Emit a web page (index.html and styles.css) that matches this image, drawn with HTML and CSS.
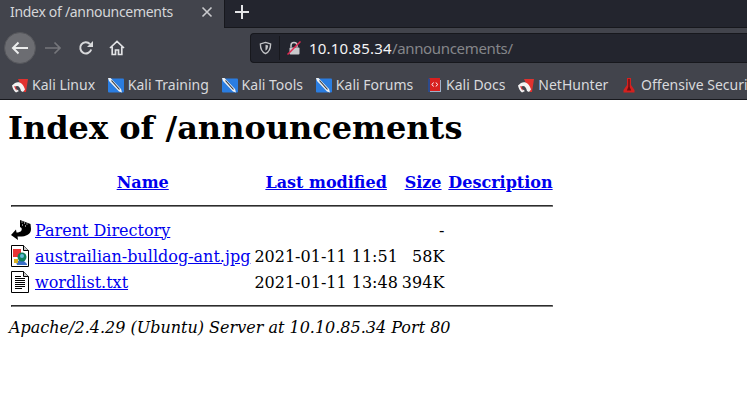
FILE: index.html
```html
<!DOCTYPE html>
<html>
<head>
<meta charset="utf-8">
<title>Index of /announcements</title>
<link rel="stylesheet" href="styles.css">
</head>
<body>
<header class="chrome">
  <div class="tabstrip">
    <div class="tab">
      <span class="tab-title">Index of /announcements</span>
      <svg class="tab-close" width="12" height="12" viewBox="0 0 12 12"><path d="M1.5 1.5l9 9M10.5 1.5l-9 9" stroke="#c9cacd" stroke-width="1.6" fill="none"/></svg>
    </div>
    <div class="tab-rest">
      <div class="newtab">
        <svg width="16" height="16" viewBox="0 0 16 16"><path d="M8 1v14M1 8h14" stroke="#e4e5e7" stroke-width="2" fill="none"/></svg>
      </div>
    </div>
  </div>
  <div class="navbar">
    <div class="nav-back">
      <svg width="18" height="18" viewBox="0 0 18 18"><path d="M17 9H2M7.500 3.500L2 9l5.500 5.500" stroke="#eceded" stroke-width="2" fill="none"/></svg>
    </div>
    <svg class="nav-icon nav-forward" width="18" height="18" viewBox="0 0 18 18"><path d="M1 9h15M10.500 3.500L16 9l-5.500 5.500" stroke="#75767b" stroke-width="1.700" fill="none"/></svg>
    <svg class="nav-icon nav-reload" width="16" height="16" viewBox="0 0 16 16"><path d="M13.200 9.500A5.600 5.600 0 1 1 12 4.100" stroke="#d8d9db" stroke-width="2" fill="none"/><path d="M15 1v6H9z" fill="#d8d9db"/></svg>
    <svg class="nav-icon nav-home" width="16" height="16" viewBox="0 0 16 16"><path d="M1 8l7-6.500L15 8M3.200 6.800V14.500h3.300V10h3v4.500h3.300V6.800" stroke="#e2e3e5" stroke-width="1.700" fill="none"/></svg>
    <div class="urlbar">
      <svg class="shield" width="13" height="14" viewBox="0 0 14 14"><path d="M7 1l5.500 1.600c0 5-1.500 8.600-5.500 10.400C3 11.200 1.500 7.600 1.500 2.600z" stroke="#c3c4c7" stroke-width="1.500" fill="none"/><path d="M7 3.500l2.800.8c0 2.400-.8 4.300-2.800 5.700z" fill="#c3c4c7"/></svg>
      <span class="url-sep"></span>
      <svg class="lock" width="14" height="14" viewBox="0 0 14 14"><path d="M4 6.500V4.500a3 3 0 0 1 6 0v2" stroke="#c9cacd" stroke-width="1.500" fill="none"/><rect x="2.500" y="6.500" width="10" height="7" rx="1" fill="#c9cacd"/><path d="M0.500 13.500L13.500 .5" stroke="#e22850" stroke-width="1.500"/></svg>
      <span class="url"><span class="url-host">10.10.85.34</span><span class="url-path">/announcements/</span></span>
    </div>
  </div>
  <nav class="bookmarks">
    <a class="bookmark"><svg class="fav" viewBox="0 0 16 16"><use href="#kali-red"/></svg>Kali Linux</a>
    <a class="bookmark"><svg class="fav" viewBox="0 0 16 16"><use href="#kali-blue"/></svg>Kali Training</a>
    <a class="bookmark"><svg class="fav" viewBox="0 0 16 16"><use href="#kali-blue"/></svg>Kali Tools</a>
    <a class="bookmark"><svg class="fav" viewBox="0 0 16 16"><use href="#kali-blue"/></svg>Kali Forums</a>
    <a class="bookmark"><svg class="fav" viewBox="0 0 16 16"><path d="M3 1h11v13H3z" fill="#d8201f"/><path d="M2 1.500h2V15H2z" fill="#2c4a8c"/><path d="M14 3h1v12H4v-1h10z" fill="#9fb0c8"/><path d="M7.500 5.500L6 7.500l1.500 2M10 5.500l1.500 2-1.500 2" stroke="#fff" stroke-width="1" fill="none"/></svg>Kali Docs</a>
    <a class="bookmark"><svg class="fav" viewBox="0 0 16 16"><use href="#kali-red"/></svg>NetHunter</a>
    <a class="bookmark"><svg class="fav" viewBox="0 0 16 16"><path d="M6 1h4v7l3.500 5v2.500h-11V13L6 8z" fill="#d5211f"/><path d="M7.300 2h1.400v8l1.500 3.500H5.800L7.300 10z" fill="#6b0f10"/></svg>Offensive Security</a>
  </nav>
</header>
<svg class="defs" width="0" height="0">
  <defs>
    <g id="kali-red"><path d="M6 2h10l-2 13h-2z" fill="#e0322f"/><path d="M0 8.500L3 6c4-2 8 0 10 6.500l-2 2.500-2-1c-.5-3-2-5-4-5-1.500 0-2 1-1.500 2.500L7 14l-3 1.500C2 14.500.5 11 0 8.500z" fill="#f3f3f3"/><path d="M2 9.500L4 13l1 .5L3.500 9z" fill="#d8343a"/></g>
    <g id="kali-blue"><rect x="0" y="1.500" width="16" height="14" rx="1" fill="#2a7de1"/><path d="M0 1l2.500 0L13 12l1 3.500-3-1L1 4z" fill="#eef1f4"/><path d="M3.500 3.500L11.500 12.500" stroke="#2b2d33" stroke-width="1.100"/></g>
  </defs>
</svg>
<main class="page">
  <h1 class="title">Index of /announcements</h1>
  <table class="listing">
    <tr class="listing-head"><th class="col-icon"></th><th><a href="#">Name</a></th><th><a href="#">Last modified</a></th><th><a href="#">Size</a></th><th><a href="#">Description</a></th></tr>
    <tr><th colspan="5"><hr class="rule"></th></tr>
    <tr>
      <td class="col-icon"><svg class="file-icon" viewBox="0 0 20 22"><path d="M0 16L5 10.500l.5 3C9 13.500 11.500 12 10.500 9L9 8V1l10.500 4 .5 5c0 6-6 8-13.500 7.500l.5 3.500z" fill="#000"/><path d="M10.500 2.500h1v1h-1zM13 3.500h1v1h-1zM15.500 4.500h1v1h-1zM11 5.500h1v1h-1zM14 6.500h1v1h-1z" fill="#fff"/></svg></td>
      <td><a href="#">Parent Directory</a></td><td class="right"></td><td class="right">- </td><td></td>
    </tr>
    <tr>
      <td class="col-icon"><svg class="file-icon" viewBox="0 0 20 22"><path d="M.5.500h12l5 5v16H.500z" fill="#fff" stroke="#000"/><path d="M12.500.500v5h5" fill="#ccc" stroke="#000"/><path d="M2 4h8v8H2z" fill="#e83434"/><path d="M5 17l6-3 5 5v1H6z" fill="#3a6fc8"/><circle cx="11" cy="12" r="4.500" fill="#0f7f5c"/><circle cx="11" cy="11" r="2" fill="#63b8d8"/><path d="M3 14h4v4H3z" fill="#d8b020"/></svg></td>
      <td><a href="#">austrailian-bulldog-ant.jpg</a></td><td class="right">2021-01-11 11:51</td><td class="right">58K</td><td></td>
    </tr>
    <tr>
      <td class="col-icon"><svg class="file-icon" viewBox="0 0 20 22"><path d="M.5.500h12l5 5v16H.500z" fill="#fff" stroke="#000"/><path d="M12.500.500v5h5" fill="#ccc" stroke="#000"/><path d="M4 5.500h6M4 7.500h10M4 9.500h10M4 11.500h10M4 13.500h10M4 15.500h10M4 17.500h7" stroke="#000" stroke-width="1"/></svg></td>
      <td><a href="#">wordlist.txt</a></td><td class="right">2021-01-11 13:48</td><td class="right">394K</td><td></td>
    </tr>
    <tr><th colspan="5"><hr class="rule"></th></tr>
  </table>
  <address class="server">Apache/2.4.29 (Ubuntu) Server at 10.10.85.34 Port 80</address>
</main>
</body>
</html>
```
FILE: styles.css
```css
html, body {
  margin: 0;
  padding: 0;
  background: #fff;
}
body {
  width: 747px;
  height: 401px;
  overflow: hidden;
  font-family: "DejaVu Serif", serif;
  font-size: 16px;
  color: #000;
}
.defs {
  display: block;
  height: 0;
}
.chrome {
  background: #42444c;
  font-family: "Noto Sans", sans-serif;
  border-bottom: 1px solid #17181d;
}
.tabstrip {
  display: flex;
  height: 28px;
  background: #23252e;
}
.tab {
  width: 224px;
  box-sizing: border-box;
  padding: 0 10px 5px;
  display: flex;
  align-items: center;
  justify-content: space-between;
  background: #42444c;
  color: #d5d6d9;
  font-size: 14px;
  letter-spacing: -0.3px;
}
.tab-close {
  margin-right: 1px;
}
.tab-rest {
  flex: 1;
  border-left: 1px solid #17181d;
  border-bottom: 1px solid #17181d;
}
.newtab {
  width: 33px;
  height: 23px;
  display: flex;
  align-items: center;
  justify-content: center;
}
.navbar {
  height: 42px;
  display: flex;
  align-items: center;
  box-sizing: border-box;
  padding: 0 0 2px 4px;
}
.nav-back {
  width: 32px;
  height: 32px;
  border-radius: 50%;
  background: #6c6d72;
  border: 1px solid #55565b;
  box-sizing: border-box;
  display: flex;
  align-items: center;
  justify-content: center;
}
.nav-icon {
  flex: none;
}
.nav-forward {
  margin-left: 8px;
}
.nav-reload {
  margin-left: 16px;
}
.nav-home {
  margin-left: 15px;
}
.urlbar {
  margin-left: 125px;
  flex: 1;
  height: 30px;
  box-sizing: border-box;
  background: #23252e;
  border: 1px solid #17181d;
  border-right: 0;
  border-radius: 4px 0 0 4px;
  display: flex;
  align-items: center;
  padding-left: 8px;
  font-size: 15px;
}
.shield {
  flex: none;
}
.url-sep {
  width: 1px;
  height: 24px;
  background: #17181d;
  margin: 0 7px;
}
.lock {
  flex: none;
}
.url {
  margin-left: 8px;
  white-space: nowrap;
}
.url-host {
  color: #f4f4f5;
  letter-spacing: 0.2px;
}
.url-path {
  color: #85868a;
  letter-spacing: -0.33px;
}
.bookmarks {
  height: 29px;
  display: flex;
  align-items: center;
  padding-left: 12px;
  gap: 12.8px;
  overflow: hidden;
  font-size: 14px;
  color: #d8d9dc;
  white-space: nowrap;
}
.bookmark {
  display: flex;
  align-items: center;
  gap: 4px;
  flex: none;
}
.fav {
  width: 16px;
  height: 16px;
  flex: none;
}
.page {
  padding: 0 8px;
}
.title {
  font-size: 32px;
  font-weight: bold;
  margin: 8px 0 22px;
  line-height: 40px;
}
.listing {
  border-spacing: 2px;
}
.listing th, .listing td {
  padding: 1px;
}
.listing .listing-head th {
  padding-bottom: 2px;
}
.listing a {
  color: #0000ee;
  text-decoration: underline;
}
.col-icon {
  width: 20px;
  vertical-align: top;
}
.file-icon {
  display: block;
  width: 20px;
  height: 22px;
}
.right {
  text-align: right;
}
.rule {
  margin: 8px 0;
  border: 1px inset #808080;
}
.server {
  font-style: italic;
  padding-left: 1px;
}
```
